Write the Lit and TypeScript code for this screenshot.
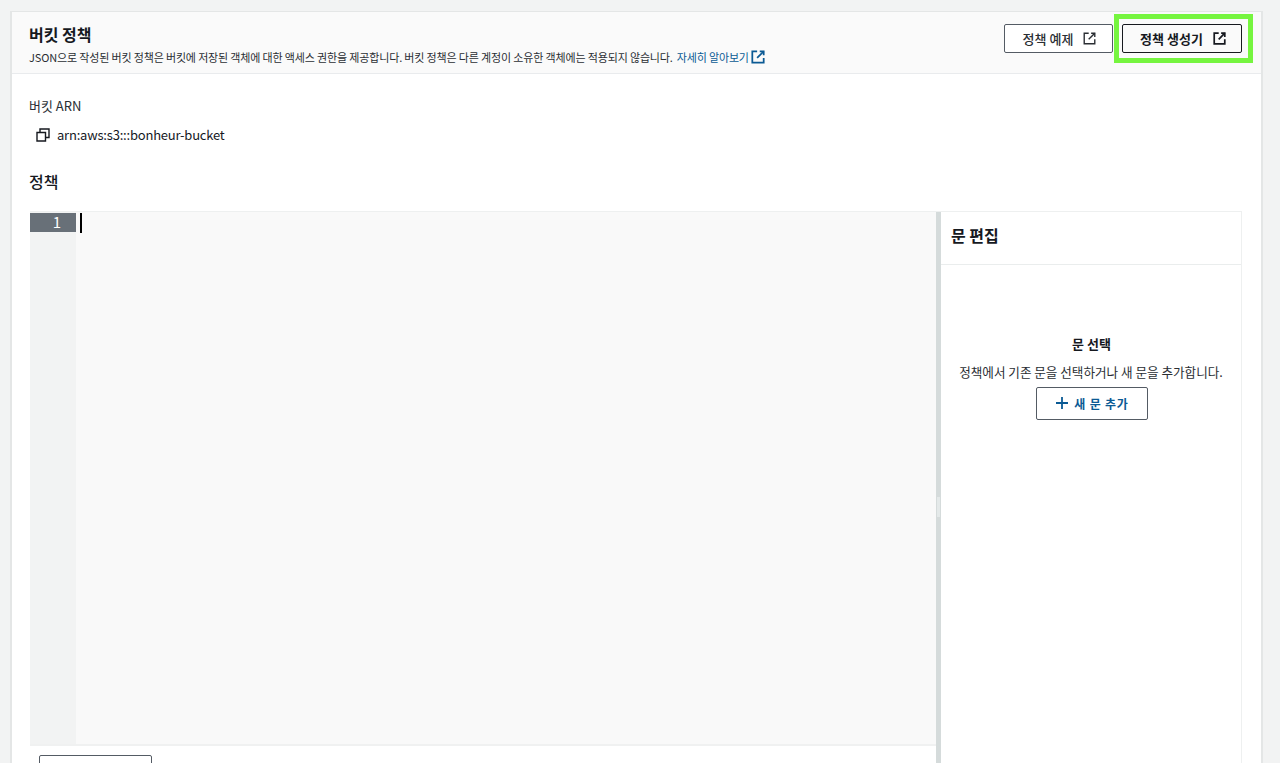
import { LitElement, html, css, svg } from "lit";
import { customElement } from "lit/decorators.js";

const ext = (size: number, sw: number) => html`<svg class="ext" width=${size} height=${size} viewBox="0 0 16 16" fill="none" stroke="currentColor" stroke-width=${sw}>
  ${svg`<path d="M7 1.5H1.5v13h13V9"/><path d="M10 1.5h4.5V6"/><path d="M14.5 1.5 7 9"/>`}
</svg>`;

@customElement("app-root")
export class AppRoot extends LitElement {
  static styles = css`
    :host { display: block; position: relative; height: 763px; overflow: hidden; background: #f2f3f3; font-family: "Noto Sans CJK KR", "Noto Sans", sans-serif; color: #16191f; }
    .card { margin: 11px 17px 0 10px; height: 760px; box-sizing: border-box; background: #fff; border: 1px solid #e4e6e6; border-width: 1px 2px 0 2px; }
    .head { height: 62px; box-sizing: border-box; background: #fafafa; border-bottom: 1px solid #e9ebed; padding: 12px 19px 0 17px; display: flex; justify-content: space-between; }
    h1 { margin: 0; font-size: 16px; line-height: 20px; font-weight: 700; color: #16191f; }
    .desc { margin: 5px 0 0; font-size: 11px; line-height: 16px; color: #2a2e33; display: flex; align-items: center; gap: 4px; white-space: nowrap; letter-spacing: -0.15px; }
    .desc a { color: #0b5a94; display: inline-flex; align-items: center; gap: 2px; text-decoration: none; }
    .actions { display: flex; gap: 9px; }
    .btn { height: 29px; box-sizing: border-box; border: 1px solid #545b64; border-radius: 2px; background: #fff; font-size: 13px; font-weight: 500; color: #2a2e33; display: flex; align-items: center; justify-content: center; gap: 10px; white-space: nowrap; padding-left: 2px; }
    .b1 { width: 109px; }
    .b2 { width: 120px; border-color: #16191f; color: #16191f; font-weight: 700; background: #fafafa; }
    .body { padding: 22px 19px 0 17px; }
    .label { font-size: 13px; line-height: 20px; color: #2a2e33; }
    .arn { margin: 9px 0 0 7px; display: flex; align-items: center; gap: 7px; font-size: 13px; line-height: 20px; color: #16191f; letter-spacing: -0.2px; }
    h2 { margin: 24px 0 0; font-size: 16px; line-height: 24px; font-weight: 500; color: #16191f; }
    .editor { margin: 18px 0 0 1px; height: 560px; display: flex; border-top: 1px solid #eef0f0; }
    .left { width: 906px; flex: none; display: flex; flex-direction: column; }
    .code { height: 532px; flex: none; background: #f9f9f9; display: flex; border-bottom: 2px solid #f0f1f1; }
    .gutter { width: 46px; background: #f2f3f3; }
    .line { height: 19px; margin-top: 1px; background: #687078; color: #fff; font-size: 15px; line-height: 17px; text-align: right; padding-right: 15px; box-sizing: border-box; width: 46px; }
    .caret { width: 2px; height: 20px; margin: 1px 0 0 4px; background: #000; }
    .foot { padding: 9px 0 0 9px; }
    .fbtn { width: 113px; height: 30px; box-sizing: border-box; border: 1px solid #545b64; border-radius: 2px; background: #fff; }
    .split { width: 5px; flex: none; background: #d5dbdb; position: relative; }
    .split::after { content: ""; position: absolute; left: 1px; top: 285px; width: 3px; height: 20px; background: #e4e9e9; }
    .right { flex: 1; border: 1px solid #eef0f0; border-width: 0 1px 0 0; }
    .rhead { height: 53px; box-sizing: border-box; padding: 11px 0 0 10px; border-bottom: 1px solid #eaeded; font-size: 16px; line-height: 24px; font-weight: 700; color: #16191f; }
    .empty { padding-top: 69px; display: flex; flex-direction: column; align-items: center; }
    .empty b { font-size: 13px; line-height: 20px; font-weight: 700; color: #16191f; padding-left: 1px; }
    .empty p { margin: 8px 0 0; font-size: 12.6px; line-height: 20px; color: #2a2e33; white-space: nowrap; }
    .add { margin: 5px 0 0 2px; width: 112px; height: 33px; box-sizing: border-box; border: 1px solid #545b64; border-radius: 2px; background: #fff; color: #0b5a94; font-size: 12px; font-weight: 700; display: flex; align-items: center; justify-content: center; gap: 5px; letter-spacing: 0.8px; padding-bottom: 1px; }
    .mark { position: absolute; left: 1114px; top: 14px; width: 139px; height: 49px; box-sizing: border-box; border: 5px solid #76f53f; pointer-events: none; }
  `;

  render() {
    return html`
      <div class="card">
        <div class="head">
          <div>
            <h1>버킷 정책</h1>
            <p class="desc">JSON으로 작성된 버킷 정책은 버킷에 저장된 객체에 대한 액세스 권한을 제공합니다. 버킷 정책은 다른 계정이 소유한 객체에는 적용되지 않습니다. <a>자세히 알아보기 ${ext(14, 2)}</a></p>
          </div>
          <div class="actions">
            <div class="btn b1">정책 예제 ${ext(13, 1.7)}</div>
            <div class="btn b2">정책 생성기 ${ext(13, 2.1)}</div>
          </div>
        </div>
        <div class="body">
          <div class="label">버킷 ARN</div>
          <div class="arn">
            <svg width="14" height="14" viewBox="0 0 14 14" fill="none" stroke="#16191f" stroke-width="1.4"><path d="M1 4.5h8.5V13H1z"/><path d="M4 4V1h9v8.5H9.5"/></svg>
            arn:aws:s3:::bonheur-bucket
          </div>
          <h2>정책</h2>
          <div class="editor">
            <div class="left">
              <div class="code">
                <div class="gutter"><div class="line">1</div></div>
                <div class="caret"></div>
              </div>
              <div class="foot"><div class="fbtn"></div></div>
            </div>
            <div class="split"></div>
            <div class="right">
              <div class="rhead">문 편집</div>
              <div class="empty">
                <b>문 선택</b>
                <p>정책에서 기존 문을 선택하거나 새 문을 추가합니다.</p>
                <div class="add">
                  <svg width="14" height="14" viewBox="0 0 14 14" fill="none" stroke="currentColor" stroke-width="1.8"><path d="M7 1v12M1 7h12"/></svg>
                  새 문 추가
                </div>
              </div>
            </div>
          </div>
        </div>
      </div>
      <div class="mark"></div>
    `;
  }
}
